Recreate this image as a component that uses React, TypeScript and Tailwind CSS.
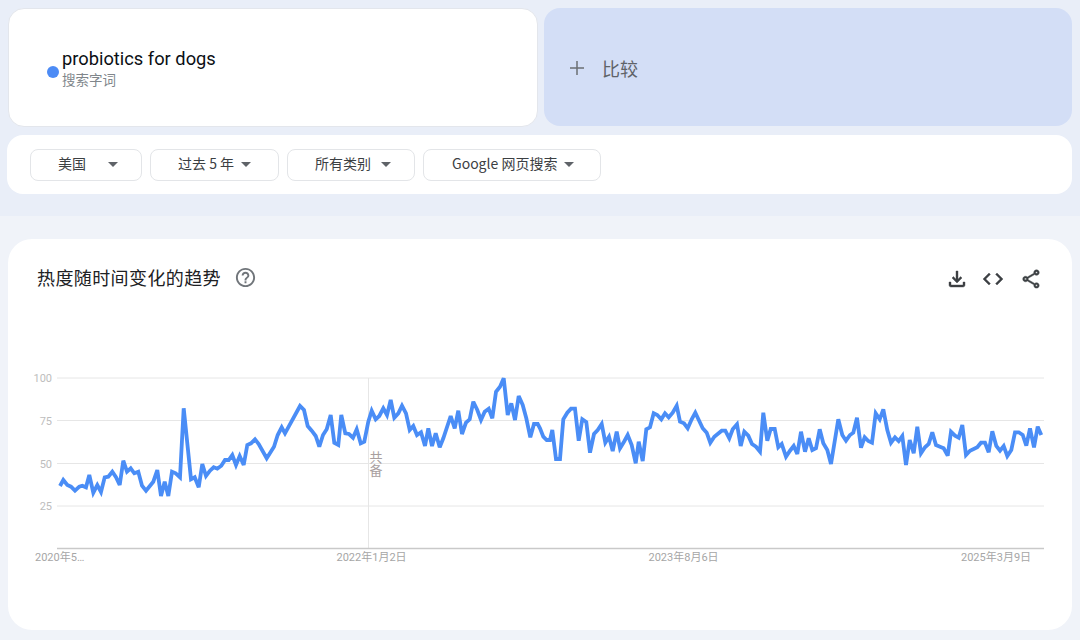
import { MdHelpOutline } from "react-icons/md";

const cjk = '"Noto Sans CJK SC", sans-serif';
const OFFX = [20, 280, 540, 800];
const RAW: number[][] = [
  [120,348,130,330,142,345,153,350,165,362,178,350,187,347,198,352,208,315,220,368,232,345,243,366,254,322,265,320,277,305,288,322,299,345,310,272,321,305,332,295,343,310,355,305,366,347,378,362,400,335,412,300,423,378,434,335,445,378,456,305,467,310,480,322,491,115,513,328,524,322,536,352,547,282,558,318,570,302,581,292,592,296,604,287,615,270,626,270,637,255,648,285,659,258,671,285,682,225,693,220,705,208,716,222,740,265,762,230,773,195],
  [5,172,15,190,60,108,72,120,83,168,95,182,107,198,118,230,129,195,140,178,152,135,163,218,175,225,184,135,196,190,207,192,219,203,230,178,242,220,253,215,265,155,275,122,287,148,298,138,310,115,321,135,332,90,343,143,355,130,366,107,378,130,389,180,400,168,411,195,423,187,435,228,445,175,456,228,467,190,479,232,490,205,512,138,524,175,535,122,546,192,558,158,569,148,580,95,592,120,603,150,614,125,626,116,637,145,648,65,660,50,671,25,683,135,694,100,705,150,716,78,728,105,739,145,751,202,762,162,773,162],
  [0,175,10,200,20,210,30,210,37,180,48,267,60,267,70,148,82,128,93,116,105,116,116,212,127,148,139,156,150,248,162,192,173,180,185,162,196,218,207,200,218,243,230,185,240,235,252,215,263,195,275,225,287,280,296,215,308,273,319,178,330,172,341,130,352,135,364,148,375,130,386,142,398,128,410,107,420,155,432,160,443,175,455,148,466,128,488,175,500,188,511,218,523,200,545,182,556,182,568,205,578,178,591,163,602,228,613,185,625,197,636,222,648,230,660,245,670,128,682,212,692,177,704,177,715,232,725,222,738,260,750,242,761,228,772,252],
  [3,185,15,245,26,205,37,240,48,235,59,178,70,220,82,240,93,282,115,148,127,195,138,212,150,195,160,188,171,143,183,233,194,202,205,213,216,218,227,130,239,148,250,118,262,180,273,218,285,202,296,213,307,198,318,285,329,210,341,250,352,170,363,250,375,232,386,222,397,187,408,225,420,230,431,235,443,257,453,185,465,197,476,203,487,165,498,255,510,242,521,237,532,232,543,218,555,218,566,247,577,184,589,228,600,242,611,228,622,258,634,240,645,187,656,187,668,195,679,227,690,175,702,232,713,170,724,195],
];
const points = RAW.flatMap((seg, i) => {
  const out: string[] = [];
  for (let k = 0; k < seg.length; k += 2) {
    out.push(`${(OFFX[i] + seg[k] / 3).toFixed(1)},${(370 + seg[k + 1] / 3).toFixed(1)}`);
  }
  return out;
}).join(" ");

function Caret() {
  return (
    <svg width="10" height="5" viewBox="0 0 10 5" className="shrink-0">
      <path d="M0 0h10L5 5z" fill="#5f6368" />
    </svg>
  );
}

function Glyph({ d, size, sw, className }: { d: string; size: number; sw: number; className?: string }) {
  return (
    <svg width={size} height={size} viewBox="0 0 24 24" className={className}>
      <path d={d} fill="currentColor" stroke="currentColor" strokeWidth={sw} />
    </svg>
  );
}

const DOWNLOAD = "M18 15v3H6v-3H4v3c0 1.1.9 2 2 2h12c1.1 0 2-.9 2-2v-3h-2zm-1-4-1.41-1.41L13 12.17V4h-2v8.17L8.41 9.59 7 11l5 5 5-5z";
const CODE = "M9.4 16.6 4.8 12l4.6-4.6L8 6l-6 6 6 6 1.4-1.4zm5.2 0 4.6-4.6-4.6-4.6L16 6l6 6-6 6-1.4-1.4z";
const SHARE = "M18 16.08c-.76 0-1.44.3-1.96.77L8.91 12.7c.05-.23.09-.46.09-.7s-.04-.47-.09-.7l7.05-4.11c.54.5 1.25.81 2.04.81 1.66 0 3-1.34 3-3s-1.34-3-3-3-3 1.34-3 3c0 .24.04.47.09.7L8.04 9.81C7.5 9.31 6.79 9 6 9c-1.66 0-3 1.34-3 3s1.34 3 3 3c.79 0 1.5-.31 2.04-.81l7.12 4.16c-.05.21-.08.43-.08.65 0 1.61 1.31 2.92 2.92 2.92s2.92-1.31 2.92-2.92-1.31-2.92-2.92-2.92zM18 4c.55 0 1 .45 1 1s-.45 1-1 1-1-.45-1-1 .45-1 1-1zM6 13c-.55 0-1-.45-1-1s.45-1 1-1 1 .45 1 1-.45 1-1 1zm12 7.02c-.55 0-1-.45-1-1s.45-1 1-1 1 .45 1 1-.45 1-1 1z";

function Filter({ label, w, gap, pl }: { label: string; w: string; gap: string; pl: string }) {
  return (
    <div className={`flex h-[32px] items-center rounded-[8px] border border-[#e3e5e8] bg-white text-[14px] text-[#3c4043] ${w} ${pl}`}>
      <span className="-mt-[2px] whitespace-nowrap">{label}</span>
      <span className={gap}><Caret /></span>
    </div>
  );
}

const GRID = [378, 420.5, 463.5, 506];
const YL = [["100", 378], ["75", 420.5], ["50", 463.5], ["25", 506]] as const;
const XL = [["2020年5…", 35], ["2022年1月2日", 336.5], ["2023年8月6日", 648.5], ["2025年3月9日", 961]] as const;

export default function App() {
  return (
    <div className="flex h-[640px] w-[1080px] flex-col overflow-hidden bg-[#f0f3f9]" style={{ fontFamily: cjk }}>
      <div className="flex h-[216px] flex-col bg-[#e9eef8] pl-[8px] pr-[8px] pt-[8px]">
        <div className="flex h-[119px] gap-[6px]">
          <div className="flex w-[530px] items-center rounded-[16px] border border-[#e3e6ec] bg-white pl-[38px]">
            <span className="mt-[9px] h-[12px] w-[12px] rounded-full bg-[#4c8bf5]" />
            <div className="ml-[3px] flex flex-col pt-[1px]">
              <span className="text-[18.3px] leading-[22px] text-[#0b0f14]" style={{ fontFamily: '"Roboto", sans-serif' }}>probiotics for dogs</span>
              <span className="text-[13.5px] leading-[19px] text-[#80868b]">搜索字词</span>
            </div>
          </div>
          <div className="flex h-[118px] w-[528px] items-center rounded-[16px] bg-[#d3def6] pl-[26px] pt-[2px] text-[#5f6368]">
            <svg width="14" height="14" viewBox="0 0 14 14"><path d="M7 0v14M0 7h14" stroke="#6b6f73" strokeWidth="1.5" /></svg>
            <span className="ml-[18px] text-[18px]">比较</span>
          </div>
        </div>
        <div className="mt-[8px] flex h-[59px] w-[1065px] -translate-x-px items-center gap-[8px] rounded-[16px] bg-white pl-[23px]">
          <Filter label="美国" w="w-[112px]" pl="pl-[27px]" gap="ml-[22px]" />
          <Filter label="过去 5 年" w="w-[129px]" pl="pl-[27px]" gap="ml-[7px]" />
          <Filter label="所有类别" w="w-[128px]" pl="pl-[27px]" gap="ml-[10px]" />
          <Filter label="Google 网页搜索" w="w-[178px]" pl="pl-[28px]" gap="ml-[7px]" />
        </div>
      </div>
      <div className="ml-[8px] mt-[23px] flex h-[391px] w-[1064px] flex-col rounded-[24px] bg-white">
        <div className="flex h-[80px] items-center pl-[29px] pr-[30px]">
          <span className="mb-[4px] text-[18px] tracking-[0.4px] text-[#202124]">热度随时间变化的趋势</span>
          <MdHelpOutline className="mb-[4px] ml-[13px] text-[23px] text-[#70757a]" />
          <div className="ml-auto flex items-center text-[#3c4043]">
            <Glyph d={DOWNLOAD} size={24} sw={0.4} />
            <Glyph d={CODE} size={24} sw={0.4} className="ml-[12px]" />
            <Glyph d={SHARE} size={22} sw={0.5} className="ml-[15px]" />
          </div>
        </div>
        <svg width="1064" height="311" viewBox="8 319 1064 311" className="block">
          {GRID.map((y) => <line key={y} x1="57" x2="1044" y1={y} y2={y} stroke="#e6e6e6" strokeWidth="1" />)}
          <line x1="368.5" x2="368.5" y1="378" y2="548" stroke="#e6e6e6" strokeWidth="1" />
          <line x1="57" x2="1044" y1="548.5" y2="548.5" stroke="#c9c9c9" strokeWidth="1.5" />
          {YL.map(([t, y]) => (
            <text key={t} x="52" y={y + 4} textAnchor="end" fontSize="11" fill="#bdbdbd" fontFamily="Roboto, sans-serif">{t}</text>
          ))}
          {XL.map(([t, x]) => (
            <text key={t} x={x} y="561" fontSize="11" fill="#a6a6a6" fontFamily={`Roboto, ${cjk}`}>{t}</text>
          ))}
          <text x="376" y="451" fontSize="13" fill="#a89f9f" fontFamily={cjk} style={{ writingMode: "vertical-rl" }}>共备</text>
          <polyline points={points} fill="none" stroke="#4a8df6" strokeWidth="3.8" strokeLinejoin="miter" strokeMiterlimit="3" />
        </svg>
      </div>
    </div>
  );
}
